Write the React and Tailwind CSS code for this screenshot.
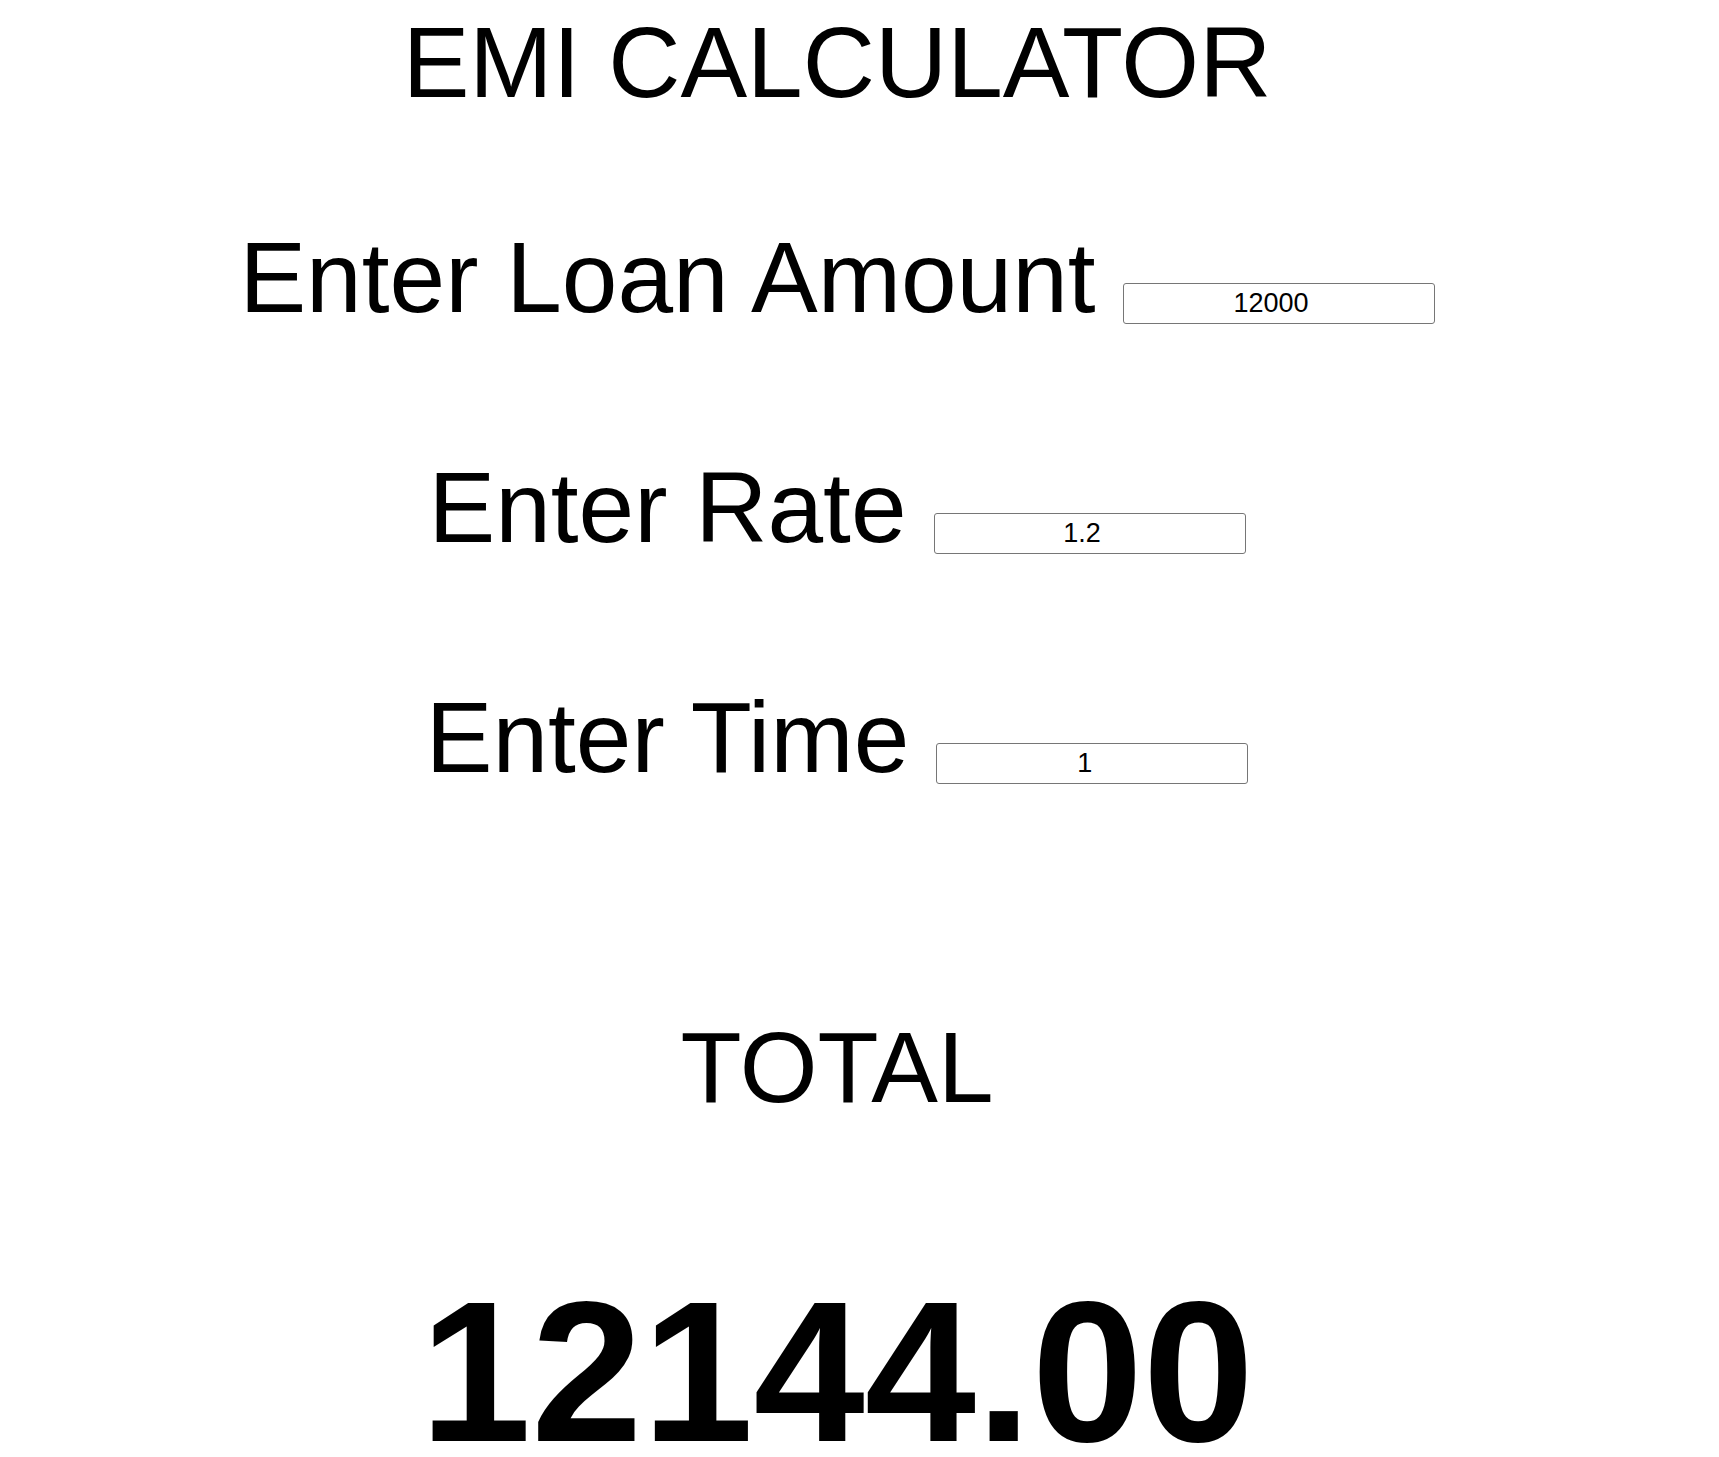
import React, { useState } from 'react';

const Field = ({ label, value, onChange, className }) => (
    <div className={`flex justify-center items-baseline gap-[27px] leading-none ${className}`}>
        <span>{label}</span>
        <input
            type="number"
            value={value}
            onChange={(e) => onChange(e.target.value)}
            className="w-[312px] h-[41px] border border-[#767676] rounded-[3px] text-[27px] text-center leading-normal px-[2px] text-black bg-white"
        />
    </div>
);

const App = () => {
    const [amount, setAmount] = useState('12000');
    const [rate, setRate] = useState('1.2');
    const [time, setTime] = useState('1');

    const p = parseFloat(amount) || 0;
    const r = parseFloat(rate) || 0;
    const t = parseFloat(time) || 0;
    const total = (p + (p * r * t) / 100).toFixed(2);

    return (
        <div className="min-h-screen bg-white text-black" style={{ fontFamily: '"Liberation Sans", Arial, sans-serif' }}>
            <div className="w-[1674px] text-center text-[100px]">
                <h1 className="pt-[12px] leading-none font-normal">EMI CALCULATOR</h1>

                <Field label="Enter Loan Amount" value={amount} onChange={setAmount} className="mt-[115px]" />
                <Field label="Enter Rate" value={rate} onChange={setRate} className="mt-[130px]" />
                <Field label="Enter Time" value={time} onChange={setTime} className="mt-[130px]" />

                <h2 className="mt-[230px] leading-none font-normal">TOTAL</h2>

                <div className="mt-[155px] text-[200px] font-bold leading-none">{total}</div>
            </div>
        </div>
    );
};

export default App;
